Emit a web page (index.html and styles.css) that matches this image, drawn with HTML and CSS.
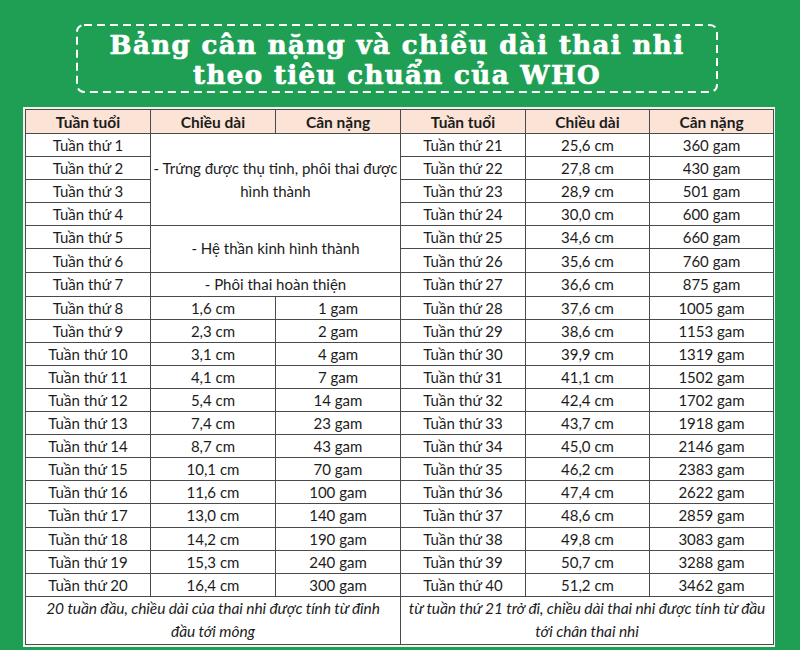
FILE: index.html
```html
<!DOCTYPE html>
<html lang="vi">
<head>
<meta charset="utf-8">
<link rel="stylesheet" href="styles.css">
</head>
<body>
<div class="page">
  <div class="title-box">
    <svg class="dash" width="642" height="69" viewBox="0 0 642 69" aria-hidden="true">
      <rect x="1" y="1" width="640" height="67" rx="7" ry="7" fill="none" stroke="#ffffff" stroke-width="2" stroke-dasharray="8 5"/>
    </svg>
    <h1 class="title">Bảng cân nặng và chiều dài thai nhi<br>theo tiêu chuẩn của WHO</h1>
  </div>
  <div class="table-frame">
    <table class="who">
      <colgroup>
        <col class="c1"><col class="c2"><col class="c3"><col class="c4"><col class="c5"><col class="c6">
      </colgroup>
      <thead>
        <tr class="head">
          <th>Tuần tuổi</th><th>Chiều dài</th><th>Cân nặng</th>
          <th>Tuần tuổi</th><th>Chiều dài</th><th>Cân nặng</th>
        </tr>
      </thead>
      <tbody>
        <tr><td>Tuần thứ 1</td><td class="merged" colspan="2" rowspan="4">- Trứng được thụ tinh, phôi thai được<br>hình thành</td><td>Tuần thứ 21</td><td>25,6 cm</td><td>360 gam</td></tr>
        <tr><td>Tuần thứ 2</td><td>Tuần thứ 22</td><td>27,8 cm</td><td>430 gam</td></tr>
        <tr><td>Tuần thứ 3</td><td>Tuần thứ 23</td><td>28,9 cm</td><td>501 gam</td></tr>
        <tr><td>Tuần thứ 4</td><td>Tuần thứ 24</td><td>30,0 cm</td><td>600 gam</td></tr>
        <tr><td>Tuần thứ 5</td><td class="merged" colspan="2" rowspan="2">- Hệ thần kinh hình thành</td><td>Tuần thứ 25</td><td>34,6 cm</td><td>660 gam</td></tr>
        <tr><td>Tuần thứ 6</td><td>Tuần thứ 26</td><td>35,6 cm</td><td>760 gam</td></tr>
        <tr><td>Tuần thứ 7</td><td class="merged" colspan="2">- Phôi thai hoàn thiện</td><td>Tuần thứ 27</td><td>36,6 cm</td><td>875 gam</td></tr>
        <tr><td>Tuần thứ 8</td><td>1,6 cm</td><td>1 gam</td><td>Tuần thứ 28</td><td>37,6 cm</td><td>1005 gam</td></tr>
        <tr><td>Tuần thứ 9</td><td>2,3 cm</td><td>2 gam</td><td>Tuần thứ 29</td><td>38,6 cm</td><td>1153 gam</td></tr>
        <tr><td>Tuần thứ 10</td><td>3,1 cm</td><td>4 gam</td><td>Tuần thứ 30</td><td>39,9 cm</td><td>1319 gam</td></tr>
        <tr><td>Tuần thứ 11</td><td>4,1 cm</td><td>7 gam</td><td>Tuần thứ 31</td><td>41,1 cm</td><td>1502 gam</td></tr>
        <tr><td>Tuần thứ 12</td><td>5,4 cm</td><td>14 gam</td><td>Tuần thứ 32</td><td>42,4 cm</td><td>1702 gam</td></tr>
        <tr><td>Tuần thứ 13</td><td>7,4 cm</td><td>23 gam</td><td>Tuần thứ 33</td><td>43,7 cm</td><td>1918 gam</td></tr>
        <tr><td>Tuần thứ 14</td><td>8,7 cm</td><td>43 gam</td><td>Tuần thứ 34</td><td>45,0 cm</td><td>2146 gam</td></tr>
        <tr><td>Tuần thứ 15</td><td>10,1 cm</td><td>70 gam</td><td>Tuần thứ 35</td><td>46,2 cm</td><td>2383 gam</td></tr>
        <tr><td>Tuần thứ 16</td><td>11,6 cm</td><td>100 gam</td><td>Tuần thứ 36</td><td>47,4 cm</td><td>2622 gam</td></tr>
        <tr><td>Tuần thứ 17</td><td>13,0 cm</td><td>140 gam</td><td>Tuần thứ 37</td><td>48,6 cm</td><td>2859 gam</td></tr>
        <tr><td>Tuần thứ 18</td><td>14,2 cm</td><td>190 gam</td><td>Tuần thứ 38</td><td>49,8 cm</td><td>3083 gam</td></tr>
        <tr><td>Tuần thứ 19</td><td>15,3 cm</td><td>240 gam</td><td>Tuần thứ 39</td><td>50,7 cm</td><td>3288 gam</td></tr>
        <tr><td>Tuần thứ 20</td><td>16,4 cm</td><td>300 gam</td><td>Tuần thứ 40</td><td>51,2 cm</td><td>3462 gam</td></tr>
      </tbody>
      <tfoot>
        <tr class="note">
          <td colspan="3">20 tuần đầu, chiều dài của thai nhi được tính từ đỉnh<br>đầu tới mông</td>
          <td colspan="3">từ tuần thứ 21 trở đi, chiều dài thai nhi được tính từ đầu<br>tới chân thai nhi</td>
        </tr>
      </tfoot>
    </table>
  </div>
</div>
</body>
</html>
```

FILE: styles.css
```css
html, body {
  margin: 0;
  padding: 0;
}
body {
  background: #1f9f54;
  width: 800px;
  height: 650px;
  overflow: hidden;
}
.page {
  display: flex;
  flex-direction: column;
  padding-top: 24px;
}
.title-box {
  position: relative;
  margin-left: 76px;
  width: 642px;
  height: 69px;
  display: flex;
  align-items: center;
  justify-content: center;
}
.dash {
  position: absolute;
  left: 0;
  top: 0;
}
.title {
  margin: 0;
  padding-top: 3px;
  color: #ffffff;
  font-family: "DejaVu Serif", "Liberation Serif", serif;
  font-weight: bold;
  font-size: 26px;
  line-height: 30px;
  text-align: center;
  letter-spacing: 1.4px;
  -webkit-text-stroke: 0.7px #ffffff;
}
.table-frame {
  margin-left: 23px;
  margin-top: 14px;
  width: 752px;
  background: #f2f4f2;
  padding: 2px;
  box-sizing: border-box;
  display: flex;
}
.who {
  border-collapse: collapse;
  width: 748px;
  table-layout: fixed;
  background: #ffffff;
  font-family: "Lato", "Open Sans", sans-serif;
  font-size: 15px;
  color: #1c1c1c;
}
.c1, .c2, .c3, .c4 { width: 125px; }
.c5, .c6 { width: 124px; }
.who th, .who td {
  border: 1px solid #4a4a4a;
  text-align: center;
  vertical-align: middle;
  padding: 0 2px;
  white-space: nowrap;
}
.head th {
  background: #fbe3d6;
  font-weight: bold;
  font-size: 15.5px;
  height: 23px;
}
.who tbody td {
  height: 22.1px;
  line-height: 18px;
}
.who tbody td.merged {
  line-height: 23px;
}
.note td {
  font-style: italic;
  line-height: 23px;
  height: 47px;
  font-size: 15.5px;
  letter-spacing: -0.1px;
}
```
